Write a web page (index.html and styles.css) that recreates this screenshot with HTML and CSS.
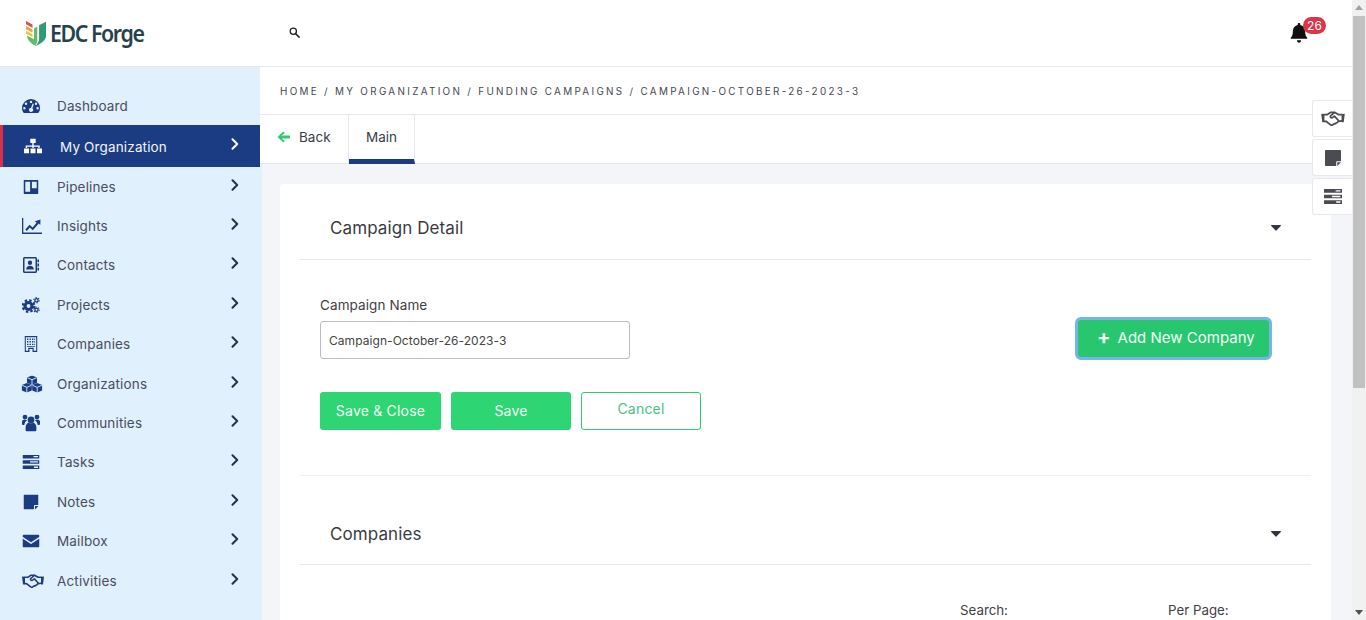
FILE: index.html
```html
<!DOCTYPE html>
<html lang="en">
<head>
<meta charset="utf-8">
<title>EDC Forge</title>
<link rel="stylesheet" href="styles.css">
</head>
<body>
<svg class="defs" width="0" height="0" aria-hidden="true">
  <defs>
    <symbol id="i-dash" viewBox="0 0 18 14"><path fill-rule="evenodd" d="M9 0a9 9 0 0 1 9 9c0 1.800-.5 3.400-1.300 4.500-.2.300-.5.500-.9.500H2.200c-.4 0-.7-.2-.9-.5C.5 12.400 0 10.800 0 9a9 9 0 0 1 9-9zM9 1.700a1.200 1.200 0 1 0 0 2.400 1.200 1.200 0 0 0 0-2.400zM4 3.600a1.200 1.200 0 1 0 0 2.400 1.200 1.200 0 0 0 0-2.400zM14 3.600a1.200 1.200 0 1 0 0 2.400 1.200 1.200 0 0 0 0-2.400zM2.400 8a1.200 1.200 0 1 0 0 2.400 1.200 1.200 0 0 0 0-2.400zM15.600 8a1.200 1.200 0 1 0 0 2.400 1.200 1.200 0 0 0 0-2.400zM10.700 4.600L8.900 8.900a2 2 0 1 0 1.500.5l1.400-4.400z"/></symbol>
    <symbol id="i-org" viewBox="0 0 18 15"><path d="M6.300 0h5.400v4.500H6.300zM8.300 4.500h1.400v2.500h6v2.500h-1.400V8.200H9.700v1.300H8.300V8.200H3.100v1.300H1.700V7h6.600zM0 10h5v5H0zM6.500 10h5v5h-5zM13 10h5v5h-5z"/></symbol>
    <symbol id="i-pipe" viewBox="0 0 15 14"><path fill-rule="evenodd" d="M1 0h13c.6 0 1 .4 1 1v12c0 .6-.4 1-1 1H1c-.6 0-1-.4-1-1V1c0-.6.4-1 1-1zM1.800 1.800v10H6.600v-10zM8.400 1.800v6.500h4.800V1.800z"/></symbol>
    <symbol id="i-chart" viewBox="0 0 20 16"><path d="M0 0h1.300v14.600H20V16H0z"/><path d="M3.300 11.600l4.300-4.800 3 2.600 4-4.700-1.700-1.500L18.500 1.500 18.300 7l-1.500-1.400-6 6.600-3-2.600-3 3.300z"/></symbol>
    <symbol id="i-contact" viewBox="0 0 16 16"><path fill-rule="evenodd" d="M1.500 0h11c.8 0 1.500.7 1.500 1.500v13c0 .8-.7 1.500-1.500 1.500h-11C.7 16 0 15.300 0 14.500v-13C0 .7.700 0 1.500 0zM1.500 1.500v13h11v-13zM7 3.500a2.200 2.200 0 1 1 0 4.400 2.200 2.200 0 0 1 0-4.400zM3.200 12c0-2 1.500-3.300 3.800-3.300s3.800 1.300 3.800 3.300v.6H3.200zM14.400 2.500H16v2.800h-1.600zM14.400 6.600H16v2.800h-1.600zM14.400 10.700H16v2.800h-1.600z"/></symbol>
    <symbol id="i-cogs" viewBox="0 0 18 16"><circle cx="6.500" cy="9" r="3.500" fill="none" stroke="currentColor" stroke-width="3.200"/><circle cx="6.500" cy="9" r="5.800" fill="none" stroke="currentColor" stroke-width="2.200" stroke-dasharray="2.500 2.050"/><circle cx="14.500" cy="3.200" r="1.600" fill="none" stroke="currentColor" stroke-width="1.300"/><circle cx="14.500" cy="3.200" r="2.700" fill="none" stroke="currentColor" stroke-width="1.100" stroke-dasharray="1.300 1.530"/><circle cx="14.500" cy="12.700" r="1.600" fill="none" stroke="currentColor" stroke-width="1.300"/><circle cx="14.500" cy="12.700" r="2.700" fill="none" stroke="currentColor" stroke-width="1.100" stroke-dasharray="1.300 1.530"/></symbol>
    <symbol id="i-build" viewBox="0 0 13 16"><path fill-rule="evenodd" d="M0 0h13v16H8v-3H5v3H0zM1.300 1.300v13.400h2.500v-3h5.400v3h2.500V1.300z"/><path d="M2.500 2.500h1.400v1.400H2.500zM5 2.500h1.400v1.400H5zM7.500 2.500h1.400v1.400H7.500zM9.800 2.500h.8v1.400h-.8zM2.500 5.100h1.400v1.400H2.500zM5 5.100h1.400v1.400H5zM7.500 5.100h1.400v1.400H7.500zM9.800 5.100h.8v1.400h-.8zM2.500 7.700h1.400v1.400H2.500zM5 7.700h1.400v1.400H5zM7.500 7.700h1.400v1.400H7.500zM9.800 7.700h.8v1.400h-.8zM2.500 10h8.100v.8H2.500z"/></symbol>
    <symbol id="i-cubes" viewBox="0 0 21 17"><path d="M10.500 0l5 1.900v5.400l-5 2-5-2V1.900zM5.300 7.600l5 2v5.300l-5 2.100-5-2.100V9.600zM15.700 7.600l5 2v5.300l-5 2.100-5-2.100V9.600z"/><path fill="none" stroke="#e1f0fd" stroke-width=".9" d="M5.800 2.200l4.700 2 4.700-2M10.500 4.200v5M.6 9.800l4.700 2 4.700-2M5.300 11.800v5M11 9.800l4.700 2 4.700-2M15.700 11.800v5"/></symbol>
    <symbol id="i-users" viewBox="0 0 18 17"><circle cx="9" cy="5.300" r="3.400"/><circle cx="3" cy="2.600" r="2.400"/><circle cx="15" cy="2.600" r="2.400"/><path d="M3.600 13c0-3 2-5 3.200-5.100.6.500 1.300.9 2.200.9s1.600-.4 2.200-.9c1.200.1 3.200 2.100 3.200 5.100V15.500c0 .8-.7 1.500-1.500 1.500H5.100c-.8 0-1.500-.7-1.500-1.500zM0 7.200C0 6 .9 5.200 1.800 5.200h2.100c.5 0 .9.200 1.300.5-1.500.9-2.600 2.400-2.900 4.800H1.300C.5 10.500 0 9.900 0 9.200zM18 7.200C18 6 17.100 5.200 16.200 5.200h-2.100c-.5 0-.9.200-1.300.5 1.500.9 2.600 2.400 2.900 4.800h1C17.500 10.500 18 9.900 18 9.200z"/></symbol>
    <symbol id="i-tasks" viewBox="0 0 17 14"><path fill-rule="evenodd" d="M0 0h17v3.400H0zM11 1v1.300h4.500V1zM0 5.300h17v3.400H0zM7.500 6.300v1.300h8V6.300zM0 10.600h17V14H0zM11.500 11.600v1.300h4v-1.300z"/></symbol>
    <symbol id="i-note" viewBox="0 0 15 15"><path fill-rule="evenodd" d="M1 0h13c.6 0 1 .4 1 1v9.500h-3.500c-.6 0-1 .4-1 1V15H1c-.6 0-1-.4-1-1V1C0 .4.400 0 1 0z"/><path d="M11.500 11.500H15L11.500 15z"/></symbol>
    <symbol id="i-mail" viewBox="0 0 17 13"><path d="M1.500 0h14c.8 0 1.500.7 1.500 1.500v.7L8.500 7.700 0 2.200v-.7C0 .7.700 0 1.500 0z"/><path d="M0 4l8.500 5.500L17 4v7.500c0 .8-.7 1.500-1.500 1.500h-14C.7 13 0 12.300 0 11.500z"/></symbol>
    <symbol id="i-hand" viewBox="0 0 22 14"><path d="M0 2.500l3 .3v7.700H1zM22 2.500l-3 .3v7.700h2z"/><path fill="none" stroke="currentColor" stroke-width="1.600" stroke-linejoin="round" stroke-linecap="round" d="M3 3.300h2.800L9 1.200h3.500L16 3.300h3M3 9.600h1.500l4.200 3.300c.8.500 1.700.4 2.300-.2l1.200-.9c.8.300 1.500 0 1.800-.7.700 0 1.300-.4 1.500-1.100l.8-.3 2.700-.5M12.500 1.200L8.800 4.500c-.5.600-.3 1.300.2 1.700.6.400 1.300.3 1.800-.2l1.500-1.200 3.700 4"/></symbol>
    <symbol id="i-caret" viewBox="0 0 10 6"><path d="M.6 0h8.800c.5 0 .8.600.4 1L5.400 5.400c-.2.300-.6.300-.8 0L.2 1C-.2.600.1 0 .6 0z"/></symbol>
    <symbol id="i-chev" viewBox="0 0 8 12"><path fill="none" stroke="currentColor" stroke-width="2" stroke-linecap="round" stroke-linejoin="round" d="M1.500 1.300L6.200 6l-4.700 4.700"/></symbol>
  </defs>
</svg>

<div class="app">
  <div class="page">
    <header class="topbar">
      <div class="brand">
        <svg class="brand-mark" viewBox="0 0 20 25" aria-hidden="true">
          <path fill="#d8504a" d="M0 0l6.500 3.500v3.200L0 3.300z"/>
          <path fill="#f0a13c" d="M0 5l6.500 3.400v3L0 8.200z"/>
          <path fill="#ecc23e" d="M0 9.800l6.500 3.400v2.800L0 12.800z"/>
          <path fill="#63bb6c" d="M.8 14.500l7.200 3.700V7.500l3.300-2v15.200l-1.700 4.200C5.500 23 1.600 19.500.8 14.500z"/>
          <path fill="#2f9a74" d="M13 4.300L20 .8v14.400c0 3.800-5.500 7.500-9.900 9.700l3-5.500V4.300z"/>
        </svg>
        <span class="brand-name">EDC Forge</span>
      </div>
      <svg class="search-icon" viewBox="0 0 12 12" aria-hidden="true"><circle cx="4.700" cy="4.700" r="3.400" fill="none" stroke="#222" stroke-width="1.400"/><path d="M7.300 7.300L11 11" stroke="#222" stroke-width="1.700" stroke-linecap="round"/></svg>
      <div class="notify">
        <svg class="bell" viewBox="0 0 16 19" aria-hidden="true"><path fill="#111" d="M8 0c.7 0 1.200.5 1.200 1.200v.7c2.700.5 4.600 2.900 4.600 5.600 0 3.800 1 5.300 2 6.400.300.300.2 1.100-.6 1.100H.8c-.8 0-.9-.8-.6-1.100 1-1.100 2-2.600 2-6.400 0-2.700 1.900-5.100 4.600-5.600v-.7C6.800.5 7.300 0 8 0zM6 16.400h4c0 1.400-.9 2.400-2 2.400s-2-1-2-2.400z"/></svg>
        <span class="badge">26</span>
      </div>
    </header>

    <div class="shell">
      <nav class="sidebar">
        <a class="nav-item nav-plain"><svg class="nav-icon i-dash"><use href="#i-dash"/></svg><span class="nav-label">Dashboard</span></a>
        <a class="nav-item nav-active"><svg class="nav-icon i-org"><use href="#i-org"/></svg><span class="nav-label">My Organization</span><svg class="chev"><use href="#i-chev"/></svg></a>
        <a class="nav-item"><svg class="nav-icon i-pipe"><use href="#i-pipe"/></svg><span class="nav-label">Pipelines</span><svg class="chev"><use href="#i-chev"/></svg></a>
        <a class="nav-item"><svg class="nav-icon i-chart"><use href="#i-chart"/></svg><span class="nav-label">Insights</span><svg class="chev"><use href="#i-chev"/></svg></a>
        <a class="nav-item"><svg class="nav-icon i-contact"><use href="#i-contact"/></svg><span class="nav-label">Contacts</span><svg class="chev"><use href="#i-chev"/></svg></a>
        <a class="nav-item"><svg class="nav-icon i-cogs"><use href="#i-cogs"/></svg><span class="nav-label">Projects</span><svg class="chev"><use href="#i-chev"/></svg></a>
        <a class="nav-item"><svg class="nav-icon i-build"><use href="#i-build"/></svg><span class="nav-label">Companies</span><svg class="chev"><use href="#i-chev"/></svg></a>
        <a class="nav-item"><svg class="nav-icon i-cubes"><use href="#i-cubes"/></svg><span class="nav-label">Organizations</span><svg class="chev"><use href="#i-chev"/></svg></a>
        <a class="nav-item"><svg class="nav-icon i-users"><use href="#i-users"/></svg><span class="nav-label">Communities</span><svg class="chev"><use href="#i-chev"/></svg></a>
        <a class="nav-item"><svg class="nav-icon i-tasks"><use href="#i-tasks"/></svg><span class="nav-label">Tasks</span><svg class="chev"><use href="#i-chev"/></svg></a>
        <a class="nav-item"><svg class="nav-icon i-note"><use href="#i-note"/></svg><span class="nav-label">Notes</span><svg class="chev"><use href="#i-chev"/></svg></a>
        <a class="nav-item"><svg class="nav-icon i-mail"><use href="#i-mail"/></svg><span class="nav-label">Mailbox</span><svg class="chev"><use href="#i-chev"/></svg></a>
        <a class="nav-item"><svg class="nav-icon i-hand"><use href="#i-hand"/></svg><span class="nav-label">Activities</span><svg class="chev"><use href="#i-chev"/></svg></a>
      </nav>

      <main class="content">
        <div class="crumbs">Home / My Organization / Funding Campaigns / Campaign-October-26-2023-3</div>
        <div class="tabs">
          <a class="tab tab-back"><svg class="back-arrow" viewBox="0 0 12 11" aria-hidden="true"><path fill="#2ecc71" d="M5.800.4L.5 5.500l5.300 5.100 1.300-1.300L4.400 6.900H12V4.100H4.400l2.700-2.400z"/></svg>Back</a>
          <a class="tab tab-main">Main</a>
        </div>
        <div class="canvas">
          <section class="card">
            <div class="section-head head-first">
              <h2 class="section-title">Campaign Detail</h2>
              <svg class="caret"><use href="#i-caret"/></svg>
            </div>
            <div class="detail">
              <div class="detail-form">
                <label class="field-label" for="campaign">Campaign Name</label>
                <input class="field-input" id="campaign" value="Campaign-October-26-2023-3">
                <div class="actions">
                  <button class="btn btn-fill btn-wide">Save &amp; Close</button>
                  <button class="btn btn-fill">Save</button>
                  <button class="btn btn-line">Cancel</button>
                </div>
              </div>
              <button class="btn-add"><span class="plus">+</span>Add New Company</button>
            </div>
            <div class="section-head head-second">
              <h2 class="section-title">Companies</h2>
              <svg class="caret"><use href="#i-caret"/></svg>
            </div>
            <div class="table-tools">
              <span class="tool-search">Search:</span>
              <span class="tool-page">Per Page:</span>
            </div>
          </section>
        </div>
      </main>
    </div>

    <div class="float-tools">
      <a class="float-btn"><svg class="float-hand"><use href="#i-hand"/></svg></a>
      <a class="float-btn"><svg class="float-note"><use href="#i-note"/></svg></a>
      <a class="float-btn"><svg class="float-tasks"><use href="#i-tasks"/></svg></a>
    </div>
  </div>

  <div class="scrollbar" aria-hidden="true">
    <span class="arrow-up"></span>
    <span class="thumb"></span>
    <span class="arrow-down"></span>
  </div>
</div>
</body>
</html>
```

FILE: styles.css
```css
* { box-sizing: border-box; }
html, body { margin: 0; height: 100%; overflow: hidden; }
body { font-family: Inter, "Liberation Sans", sans-serif; color: #3f4254; background: #fff; }
.defs { position: absolute; }
a { color: inherit; text-decoration: none; }
svg { fill: currentColor; display: block; }

.app { display: flex; width: 1366px; height: 620px; overflow: hidden; }
.page { position: relative; width: 1352px; height: 620px; display: flex; flex-direction: column; overflow: hidden; }

.topbar { height: 67px; flex: none; display: flex; align-items: center; border-bottom: 1px solid #e4e6ea; background: #fff; padding-left: 26px; }
.brand { display: flex; align-items: center; width: 264px; margin-top: 2px; }
.brand-mark { width: 20px; height: 25px; flex: none; margin-top: -2px; }
.brand-name { display: inline-block; font-family: "Noto Sans", sans-serif; font-weight: 600; font-size: 24px; letter-spacing: -1.6px; color: #27424c; margin: -4px 0 0 4px; white-space: nowrap; transform: scaleX(.89); transform-origin: left center; }
.search-icon { width: 11px; height: 11px; margin-top: -2px; margin-left: -1px; }
.notify { margin-left: auto; margin-right: 26px; margin-top: 2px; display: flex; position: relative; width: 36px; height: 34px; }
.bell { width: 18px; height: 20px; margin-top: 6px; }
.badge { position: absolute; left: 13px; top: 0; width: 23px; height: 17px; border-radius: 9px; background: #dc3545; color: #fff; font-size: 12px; line-height: 17px; text-align: center; }

.shell { flex: 1; display: flex; min-height: 0; }
.sidebar { width: 260px; flex: none; background: #e1f0fd; padding-top: 20px; }
.nav-item { display: flex; align-items: center; height: 39.4px; padding-left: 22px; position: relative; font-size: 13.5px; color: #4a4d5e; }
.nav-plain { height: 38px; }
.nav-active { height: 42px; background: #1b3c82; border-left: 3px solid #d9304a; color: #f2f5fb; font-size: 13.5px; padding: 1px 0 0; }
.nav-icon { flex: none; color: #1b3c82; position: absolute; top: 50%; transform: translate(-50%, -50%); left: 30.5px; }
.nav-active .nav-icon { color: #fff; left: 30px; }
.i-dash { width: 18px; height: 14px; }
.i-org { width: 18px; height: 15px; }
.i-pipe { width: 15px; height: 14px; }
.i-chart { width: 20px; height: 16px; left: 31.5px; }
.i-contact { width: 16px; height: 16px; }
.i-cogs { width: 18px; height: 16px; }
.i-build { width: 13px; height: 16px; }
.i-cubes { width: 21px; height: 17px; left: 32px; }
.i-users { width: 18px; height: 17px; }
.i-tasks { width: 17px; height: 14px; }
.i-note { width: 15px; height: 15px; }
.i-mail { width: 17px; height: 13px; }
.i-hand { width: 22px; height: 14px; left: 32.5px; }
.nav-label { margin-left: 35px; letter-spacing: .15px; white-space: nowrap; }
.nav-active .nav-label { margin-left: 57px; letter-spacing: .15px; }
.chev { position: absolute; left: 231px; top: 50%; width: 8px; height: 12px; margin-top: -8px; color: #27304a; }
.nav-active .chev { left: 228px; color: #fff; }

.content { flex: 1; min-width: 0; display: flex; flex-direction: column; }
.crumbs { height: 48px; flex: none; display: flex; align-items: center; padding-left: 20px; border-bottom: 1px solid #e4e6ea; font-size: 9.9px; font-weight: 400; letter-spacing: 2.31px; text-transform: uppercase; color: #47494f; white-space: nowrap; }
.tabs { height: 49px; flex: none; display: flex; background: #fff; border-bottom: 1px solid #e4e6ea; }
.tab { display: flex; align-items: center; font-size: 13.5px; color: #3a3d45; }
.tab-back { width: 89px; padding: 0 0 4px 17px; border-right: 1px solid #e4e6ea; }
.back-arrow { width: 13px; height: 12px; margin-right: 9px; }
.tab-main { width: 66px; justify-content: center; border-right: 1px solid #e4e6ea; border-bottom: 5px solid #1b3c82; margin-bottom: -1px; }

.canvas { flex: 1; min-height: 0; background: #f3f5f8; border-left: 2px solid #e1f0fd; padding: 20px 21px 0 18px; }
.card { background: #fff; border-radius: 4px; height: 500px; padding: 0 20px; }
.section-head { height: 76px; display: flex; align-items: center; justify-content: space-between; padding: 0 30px; border-bottom: 1px solid #e4e6ea; }
.head-first { padding-top: 12px; }
.head-second { height: 89px; padding-top: 28px; }
.section-title { margin: 0; font-size: 17px; font-weight: 400; color: #3a3b40; letter-spacing: .1px; }
.caret { width: 10px; height: 6px; color: #33363f; }
.detail { height: 216px; display: flex; justify-content: space-between; padding: 0 39px 0 20px; border-bottom: 1px solid #f0f1f3; }
.detail-form { display: flex; flex-direction: column; padding-top: 36px; }
.field-label { font-size: 13.5px; line-height: 18px; color: #3f4045; letter-spacing: .1px; }
.field-input { width: 310px; height: 38px; margin-top: 7px; padding: 0 8px; border: 1px solid #b9bcc2; border-radius: 3px; font: 12px Inter, "Liberation Sans", sans-serif; color: #444; outline: none; letter-spacing: .06px; }
.actions { display: flex; gap: 10px; margin-top: 33px; }
.btn { width: 120px; height: 38px; border-radius: 3px; font: 400 14px Inter, "Liberation Sans", sans-serif; letter-spacing: .2px; padding: 0; cursor: pointer; }
.btn-wide { width: 121px; }
.btn-fill { background: #2ed573; border: 0; color: #f2fff7; padding-bottom: 2px; }
.btn-line { background: #fff; border: 1px solid #2ecc71; color: #4cc17f; padding-bottom: 6px; }
.btn-add { align-self: flex-start; margin-top: 57px; width: 197px; height: 43px; display: flex; align-items: center; padding: 0 0 3px 19px; background: #28c76f; color: #f2fff7; border: 3px solid #75b6e4; border-radius: 6px; font: 400 15px Inter, "Liberation Sans", sans-serif; }
.plus { font-size: 20px; font-weight: 700; line-height: 16px; margin-right: 7px; }
.table-tools { display: flex; padding: 37px 0 0 660px; font-size: 13.3px; color: #3f4045; }
.tool-search { width: 208px; }

.float-tools { position: absolute; right: 0; top: 100px; display: flex; flex-direction: column; gap: 2px; }
.float-btn { width: 40px; height: 37px; display: flex; align-items: center; justify-content: center; background: #fff; border: 1px solid #e8e9ec; border-right: 0; border-radius: 3px 0 0 3px; color: #4b4b52; }
.float-hand { width: 24px; height: 15px; }
.float-note { width: 16px; height: 16px; }
.float-tasks { width: 18px; height: 15px; }

.scrollbar { width: 14px; flex: none; background: #f1f1f1; display: flex; flex-direction: column; align-items: center; position: relative; }
.thumb { position: absolute; top: 16px; left: 1px; width: 12px; height: 372px; background: #c1c1c1; }
.arrow-up { position: absolute; top: 5px; width: 0; height: 0; border-left: 4px solid transparent; border-right: 4px solid transparent; border-bottom: 5px solid #a3a3a3; }
.arrow-down { position: absolute; bottom: 5px; width: 0; height: 0; border-left: 4px solid transparent; border-right: 4px solid transparent; border-top: 5px solid #505050; }
```
